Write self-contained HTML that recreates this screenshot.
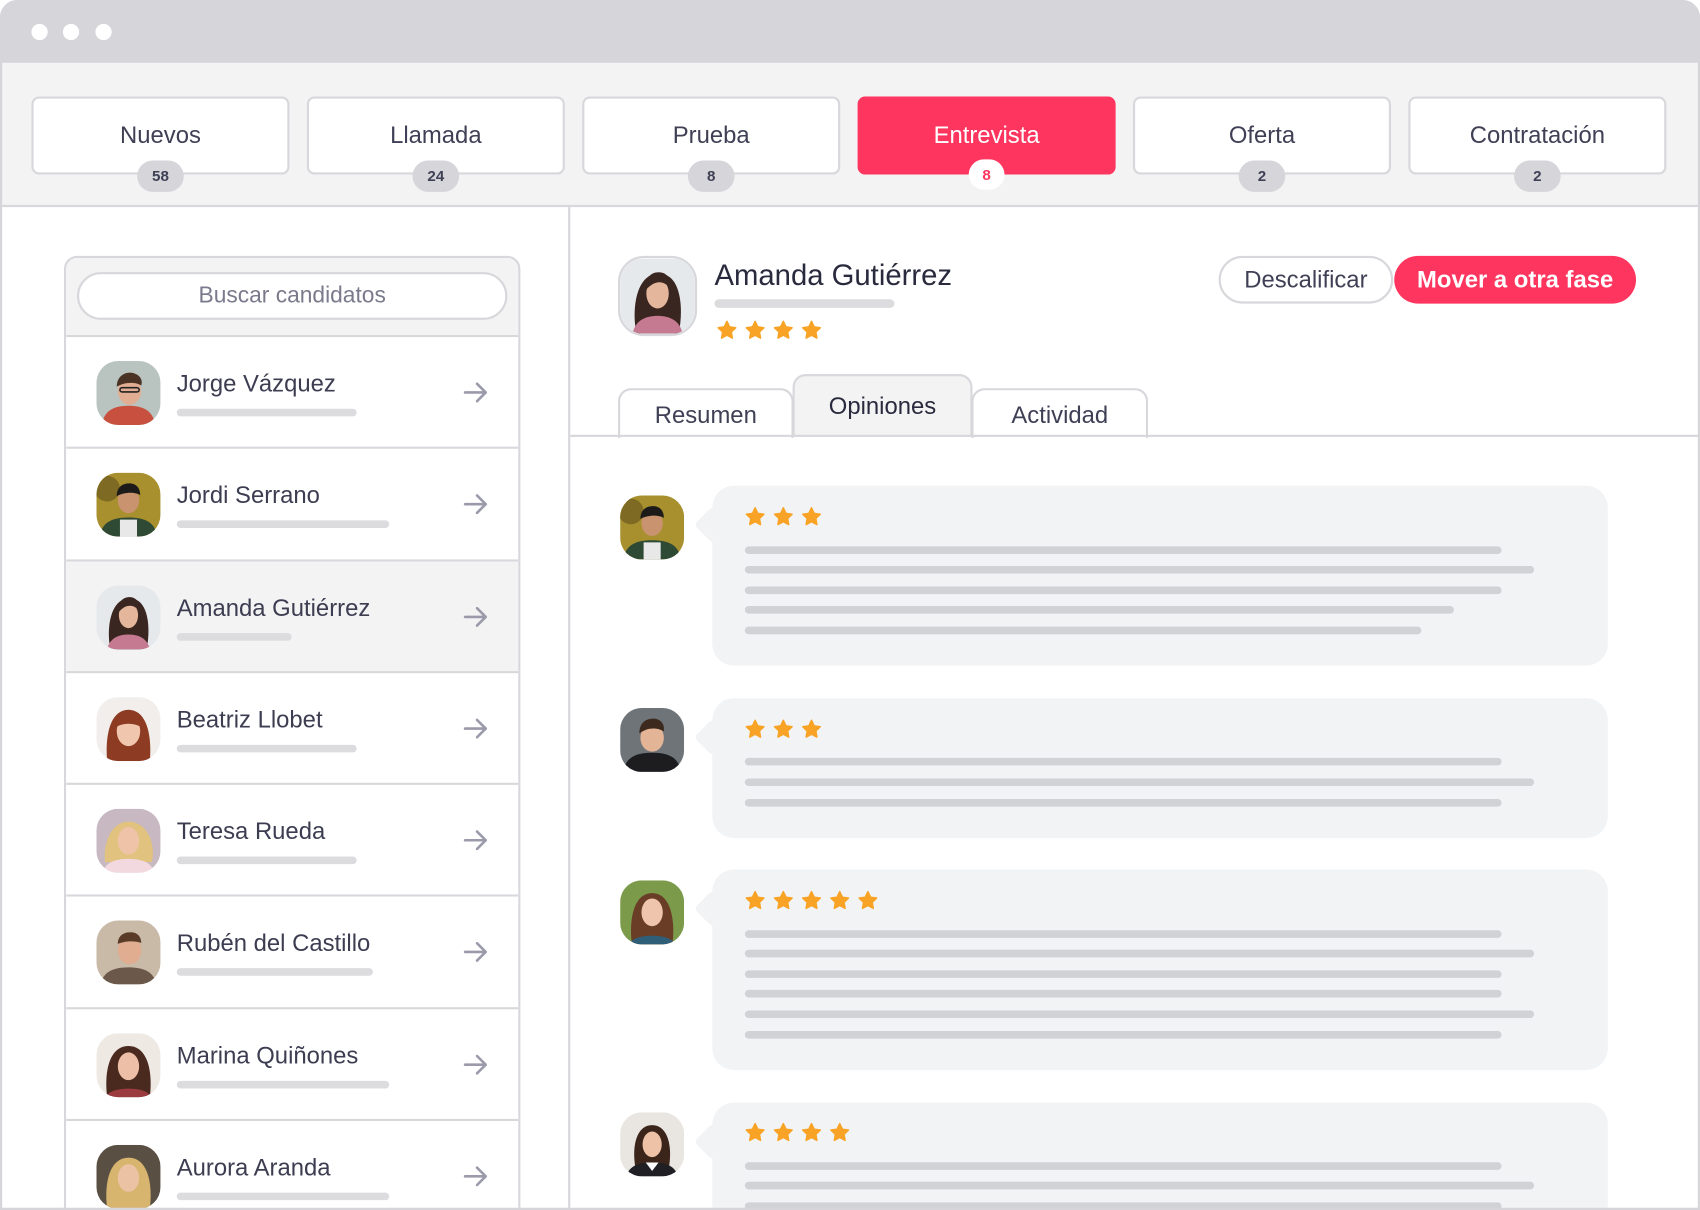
<!DOCTYPE html>
<html><head><meta charset="utf-8">
<style>
*{box-sizing:border-box;margin:0;padding:0}
html,body{width:1700px;height:1210px;overflow:hidden;background:#fff;font-family:"Liberation Sans",sans-serif;color:#3d3d52}
#w{position:absolute;left:0;top:0;width:1568px;height:1116px;transform:scale(1.08418);transform-origin:0 0;overflow:hidden}
.frame{position:absolute;left:0;top:0;width:1568px;height:1116px;border-radius:16px 16px 0 0;overflow:hidden;background:#fff}
.fborder{position:absolute;left:0;top:0;width:1568px;height:1116px;border:2px solid #d5d5da;border-radius:16px 16px 0 0;pointer-events:none}
.title{position:absolute;left:0;top:0;width:100%;height:58px;background:#d5d5da}
.dot{position:absolute;top:22px;width:15px;height:15px;border-radius:50%;background:#fff}
.stages{position:absolute;left:0;top:58px;width:100%;height:133px;background:#f3f3f4;border-bottom:2px solid #d8d8dc}
.st{position:absolute;top:31px;width:238px;height:72px;background:#fff;border:2px solid #d8d8dc;border-radius:7px;text-align:center;font-size:22px;line-height:68px;color:#3f3f55}
.st.act{background:#fe365f;border-color:#fe365f;color:#fff}
.bd{position:absolute;left:50%;top:57px;transform:translateX(-50%);height:29px;min-width:43px;padding:0 8px;border-radius:15px;background:#d5d5da;font-size:14px;font-weight:bold;line-height:29px;color:#3f3f55}
.st.act .bd{background:#fff;color:#fe365f;min-width:33px;height:28px;top:56px}
.vsep{position:absolute;left:524px;top:191px;width:2px;height:930px;background:#d8d8dc}
.list{position:absolute;left:59px;top:236px;width:421px;height:900px;border:2px solid #d8d8dc;border-radius:12px 12px 0 0;overflow:hidden}
.lh{height:73px;background:#f3f3f4;border-bottom:2px solid #d8d8dc;padding:13px 10px}
.search{height:44px;border:2px solid #d8d8dc;border-radius:22px;background:#fff;text-align:center;font-size:21px;line-height:40px;color:#7a7a8c}
.row{position:relative;height:103.3px;border-bottom:2px solid #d8d8dc;background:#fff}
.row.sel{background:#f3f3f4}
.row .av{position:absolute;left:28px;top:22px}
.row .nm{position:absolute;left:102px;top:30px;font-size:22px;color:#3d3d52}
.row .bar{position:absolute;left:102px;top:66px;height:7px;border-radius:4px;background:#dcdcdf}
.row .ar{position:absolute;left:366px;top:39px}
.av{width:59px;height:59px;border-radius:20px;overflow:hidden;display:block}
.name{position:absolute;left:659px;top:239px;font-size:27px;color:#2a2a3e}
.btn{position:absolute;top:236px;height:44px;border-radius:22px;font-size:22px;line-height:40px;text-align:center}
.tab{position:absolute;height:46px;border:2px solid #d8d8dc;border-bottom:none;border-radius:12px 12px 0 0;background:#fff;text-align:center;font-size:22px;color:#3f3f55}
.hl{position:absolute;left:526px;top:401px;width:1042px;height:2px;background:#d8d8dc}
.card{position:absolute;left:657px;width:826px;background:#f2f3f5;border-radius:20px}
.card:before{content:"";position:absolute;left:-12px;top:24px;width:24px;height:24px;background:#f2f3f5;transform:rotate(45deg);border-radius:4px}
.ln{position:absolute;left:30px;height:7px;border-radius:4px;background:#d0d2d6}
.stars{position:absolute;left:30px;display:flex;gap:7px}
</style></head><body><div id="w">
<svg width="0" height="0" style="position:absolute">
<defs>
<symbol id="star" viewBox="0 0 20 20"><path d="M10 1.5l2.6 5.4 5.9.8-4.3 4.1 1 5.9L10 14.9l-5.2 2.8 1-5.9L1.5 7.7l5.9-.8z" fill="#f8a325" stroke="#f8a325" stroke-width="1.5" stroke-linejoin="round"/></symbol>
<symbol id="arrow" viewBox="0 0 24 24"><path d="M2 12h19M13 4l8 8-8 8" fill="none" stroke="#9a9aab" stroke-width="2.4" stroke-linecap="round" stroke-linejoin="round"/></symbol>
</defs></svg>
<div class="frame">
<div class="title"><div class="dot" style="left:29px"></div><div class="dot" style="left:58px"></div><div class="dot" style="left:88px"></div></div>
<div class="stages">
<div class="st" style="left:29px">Nuevos<div class="bd">58</div></div>
<div class="st" style="left:283px">Llamada<div class="bd">24</div></div>
<div class="st" style="left:537px">Prueba<div class="bd">8</div></div>
<div class="st act" style="left:791px">Entrevista<div class="bd">8</div></div>
<div class="st" style="left:1045px">Oferta<div class="bd">2</div></div>
<div class="st" style="left:1299px">Contratación<div class="bd">2</div></div>
</div>
<div class="vsep"></div>
<div class="list">
<div class="lh"><div class="search">Buscar candidatos</div></div>
<div class="row"><svg class="av" viewBox="0 0 60 60"><rect width="60" height="60" fill="#b9c4c0"/><path d="M5 60c2-14 12-18 25-18s23 4 25 18z" fill="#c8503e"/><ellipse cx="31" cy="28" rx="11" ry="13" fill="#e2ae93"/><path d="M19 24c0-10 8-14 14-13s11 5 9 12c-4-3-14-4-23 1z" fill="#4a3324"/><rect x="22" y="25" width="18" height="4" rx="2" fill="none" stroke="#222" stroke-width="1.5"/></svg><div class="nm">Jorge Vázquez</div><div class="bar" style="width:166px"></div><svg class="ar" width="24" height="24"><use href="#arrow"/></svg></div>
<div class="row"><svg class="av" viewBox="0 0 60 60"><rect width="60" height="60" fill="#a9902f"/><circle cx="10" cy="15" r="12" fill="#7e6a22"/><path d="M3 60c2-14 12-18 27-18s25 4 27 18z" fill="#2f4a34"/><rect x="22" y="44" width="16" height="16" fill="#e8e8e8"/><ellipse cx="30" cy="26" rx="10" ry="12" fill="#c8936e"/><path d="M19 22c0-9 6-12 12-12s10 4 10 11c-5-3-15-3-22 1z" fill="#1c1b1a"/></svg><div class="nm">Jordi Serrano</div><div class="bar" style="width:196px"></div><svg class="ar" width="24" height="24"><use href="#arrow"/></svg></div>
<div class="row sel"><svg class="av" viewBox="0 0 60 60"><rect width="60" height="60" fill="#e6e9ec"/><path d="M13 60c-4-20 0-48 18-48s20 28 16 48z" fill="#3a2620"/><path d="M10 60c2-10 10-14 20-14s18 4 20 14z" fill="#c67a92"/><ellipse cx="30" cy="28" rx="9" ry="12" fill="#e4b69c"/><path d="M20 26c0-10 4-15 11-15s10 6 9 13c-4-6-12-8-20 2z" fill="#3a2620"/></svg><div class="nm">Amanda Gutiérrez</div><div class="bar" style="width:106px"></div><svg class="ar" width="24" height="24"><use href="#arrow"/></svg></div>
<div class="row"><svg class="av" viewBox="0 0 60 60"><rect width="60" height="60" fill="#f1eeec"/><path d="M10 60c-2-22 2-48 20-48s22 26 20 48z" fill="#8d3b22"/><ellipse cx="30" cy="32" rx="11" ry="14" fill="#f0c7ae"/><path d="M18 28c0-12 6-16 12-16s12 4 12 16c-8-4-16-4-24 0z" fill="#8d3b22"/></svg><div class="nm">Beatriz Llobet</div><div class="bar" style="width:166px"></div><svg class="ar" width="24" height="24"><use href="#arrow"/></svg></div>
<div class="row"><svg class="av" viewBox="0 0 60 60"><rect width="60" height="60" fill="#c7b8c2"/><path d="M8 50c-2-18 6-38 22-38s26 18 22 38z" fill="#e1c27e"/><path d="M6 60c2-10 12-13 24-13s22 3 24 13z" fill="#f2d9df"/><ellipse cx="30" cy="30" rx="10" ry="13" fill="#eec3a8"/></svg><div class="nm">Teresa Rueda</div><div class="bar" style="width:166px"></div><svg class="ar" width="24" height="24"><use href="#arrow"/></svg></div>
<div class="row"><svg class="av" viewBox="0 0 60 60"><rect width="60" height="60" fill="#c9b9a7"/><path d="M4 60c2-12 12-16 26-16s24 4 26 16z" fill="#6b584a"/><ellipse cx="31" cy="28" rx="11" ry="13" fill="#e0ad90"/><path d="M20 22c0-8 6-11 12-11s10 4 10 10c-6-2-15-2-22 1z" fill="#5a3b28"/></svg><div class="nm">Rubén del Castillo</div><div class="bar" style="width:181px"></div><svg class="ar" width="24" height="24"><use href="#arrow"/></svg></div>
<div class="row"><svg class="av" viewBox="0 0 60 60"><rect width="60" height="60" fill="#efe9e4"/><path d="M10 60c-3-24 2-48 20-48s23 24 20 48z" fill="#4a2a1e"/><ellipse cx="30" cy="31" rx="10" ry="13" fill="#edbfa6"/><path d="M8 60c4-6 12-8 22-8s18 2 22 8z" fill="#9b3a3f"/></svg><div class="nm">Marina Quiñones</div><div class="bar" style="width:196px"></div><svg class="ar" width="24" height="24"><use href="#arrow"/></svg></div>
<div class="row"><svg class="av" viewBox="0 0 60 60"><rect width="60" height="60" fill="#5a4f43"/><path d="M10 60c-3-24 2-48 20-48s23 24 20 48z" fill="#d8b56f"/><ellipse cx="30" cy="31" rx="10" ry="13" fill="#ecc2a5"/></svg><div class="nm">Aurora Aranda</div><div class="bar" style="width:196px"></div><svg class="ar" width="24" height="24"><use href="#arrow"/></svg></div>
</div>
<svg style="position:absolute;left:570px;top:236px;width:73px;height:74px;border-radius:24px;border:2px solid #d8d8dc" viewBox="0 0 60 60"><rect width="60" height="60" fill="#e6e9ec"/><path d="M13 60c-4-20 0-48 18-48s20 28 16 48z" fill="#3a2620"/><path d="M10 60c2-10 10-14 20-14s18 4 20 14z" fill="#c67a92"/><ellipse cx="30" cy="28" rx="9" ry="12" fill="#e4b69c"/><path d="M20 26c0-10 4-15 11-15s10 6 9 13c-4-6-12-8-20 2z" fill="#3a2620"/></svg>
<div class="name">Amanda Gutiérrez</div>
<div style="position:absolute;left:659px;top:276px;width:166px;height:8px;border-radius:4px;background:#dcdcdf"></div>
<div class="stars" style="left:661px;top:295px"><svg width="19" height="19"><use href="#star"/></svg><svg width="19" height="19"><use href="#star"/></svg><svg width="19" height="19"><use href="#star"/></svg><svg width="19" height="19"><use href="#star"/></svg></div>
<div class="btn" style="left:1124px;width:161px;border:2px solid #d8d8dc;color:#3f3f55;background:#fff">Descalificar</div>
<div class="btn" style="left:1286px;width:223px;background:#fe365f;color:#fff;font-weight:bold;line-height:44px">Mover a otra fase</div>
<div class="tab" style="left:570px;top:358px;width:162px;line-height:46px">Resumen</div>
<div class="tab" style="left:896px;top:358px;width:163px;line-height:46px">Actividad</div>
<div class="tab" style="left:731px;top:345px;width:166px;height:58px;background:#f3f3f4;line-height:56px;color:#2a2a3e">Opiniones</div>
<div class="hl"></div>

<svg class="av" style="position:absolute;left:572px;top:457px" viewBox="0 0 60 60"><rect width="60" height="60" fill="#a9902f"/><circle cx="10" cy="15" r="12" fill="#7e6a22"/><path d="M3 60c2-14 12-18 27-18s25 4 27 18z" fill="#2f4a34"/><rect x="22" y="44" width="16" height="16" fill="#e8e8e8"/><ellipse cx="30" cy="26" rx="10" ry="12" fill="#c8936e"/><path d="M19 22c0-9 6-12 12-12s10 4 10 11c-5-3-15-3-22 1z" fill="#1c1b1a"/></svg>
<div class="card" style="top:448px;height:166px">
<div class="stars" style="top:19px"><svg width="19" height="19"><use href="#star"/></svg><svg width="19" height="19"><use href="#star"/></svg><svg width="19" height="19"><use href="#star"/></svg></div>
<div class="ln" style="top:56px;width:698px"></div><div class="ln" style="top:74px;width:728px"></div><div class="ln" style="top:93px;width:698px"></div><div class="ln" style="top:111px;width:654px"></div><div class="ln" style="top:130px;width:624px"></div>
</div>

<svg class="av" style="position:absolute;left:572px;top:653px" viewBox="0 0 60 60"><rect width="60" height="60" fill="#6f7479"/><path d="M3 60c2-14 12-18 27-18s25 4 27 18z" fill="#1d1d1f"/><ellipse cx="30" cy="28" rx="11" ry="13" fill="#e4b496"/><path d="M18 24c0-10 6-14 13-14s11 5 10 12c-6-4-16-4-23 2z" fill="#3c2a1e"/></svg>
<div class="card" style="top:644px;height:129px">
<div class="stars" style="top:19px"><svg width="19" height="19"><use href="#star"/></svg><svg width="19" height="19"><use href="#star"/></svg><svg width="19" height="19"><use href="#star"/></svg></div>
<div class="ln" style="top:55px;width:698px"></div><div class="ln" style="top:74px;width:728px"></div><div class="ln" style="top:93px;width:698px"></div>
</div>

<svg class="av" style="position:absolute;left:572px;top:812px" viewBox="0 0 60 60"><rect width="60" height="60" fill="#7b9a4a"/><path d="M11 60c-3-24 2-48 19-48s22 24 19 48z" fill="#6a3d26"/><path d="M8 60c4-6 12-8 22-8s18 2 22 8z" fill="#2f5e78"/><ellipse cx="30" cy="30" rx="10" ry="13" fill="#efc6ad"/></svg>
<div class="card" style="top:802px;height:185px">
<div class="stars" style="top:19px"><svg width="19" height="19"><use href="#star"/></svg><svg width="19" height="19"><use href="#star"/></svg><svg width="19" height="19"><use href="#star"/></svg><svg width="19" height="19"><use href="#star"/></svg><svg width="19" height="19"><use href="#star"/></svg></div>
<div class="ln" style="top:56px;width:698px"></div><div class="ln" style="top:74px;width:728px"></div><div class="ln" style="top:93px;width:698px"></div><div class="ln" style="top:111px;width:698px"></div><div class="ln" style="top:130px;width:728px"></div><div class="ln" style="top:149px;width:698px"></div>
</div>

<svg class="av" style="position:absolute;left:572px;top:1026px" viewBox="0 0 60 60"><rect width="60" height="60" fill="#e9e6e2"/><path d="M14 50c-3-20 2-38 16-38s19 18 16 38z" fill="#3b2419"/><path d="M6 60c2-10 12-13 24-13s22 3 24 13z" fill="#1f1f24"/><path d="M24 47l6 8 6-8z" fill="#fff"/><ellipse cx="30" cy="30" rx="9" ry="12" fill="#eec2a6"/></svg>
<div class="card" style="top:1017px;height:140px">
<div class="stars" style="top:18px"><svg width="19" height="19"><use href="#star"/></svg><svg width="19" height="19"><use href="#star"/></svg><svg width="19" height="19"><use href="#star"/></svg><svg width="19" height="19"><use href="#star"/></svg></div>
<div class="ln" style="top:55px;width:698px"></div><div class="ln" style="top:73px;width:728px"></div><div class="ln" style="top:92px;width:698px"></div>
</div>
</div>
<div class="fborder"></div>
</div></body></html>
